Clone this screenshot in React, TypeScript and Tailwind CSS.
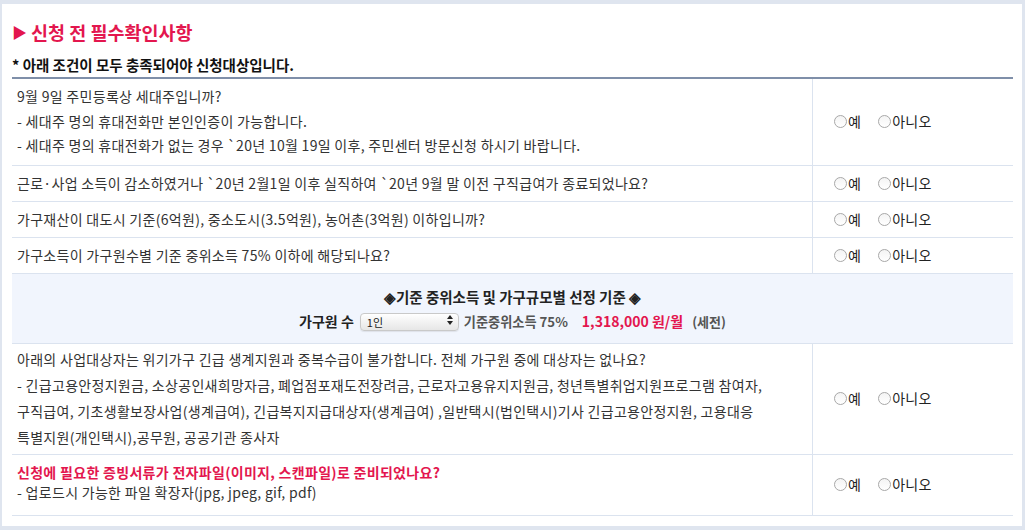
import React from 'react';

const questions = [
  {
    lines: [
      '9월 9일 주민등록상 세대주입니까?',
      '- 세대주 명의 휴대전화만 본인인증이 가능합니다.',
      '- 세대주 명의 휴대전화가 없는 경우 `20년 10월 19일 이후, 주민센터 방문신청 하시기 바랍니다.',
    ],
    pad: 'pt-[5px] pb-[7px] leading-[24.5px]',
  },
  {
    lines: ['근로·사업 소득이 감소하였거나 `20년 2월1일 이후 실직하여 `20년 9월 말 이전 구직급여가 종료되었나요?'],
    pad: 'py-[6px] leading-[23px]',
  },
  {
    lines: ['가구재산이 대도시 기준(6억원), 중소도시(3.5억원), 농어촌(3억원) 이하입니까?'],
    pad: 'py-[6px] leading-[23px]',
  },
  {
    lines: ['가구소득이 가구원수별 기준 중위소득 75% 이하에 해당되나요?'],
    pad: 'py-[6px] leading-[23px]',
  },
];

const Radio: React.FC<{ label: string }> = ({ label }) => (
  <label className="flex items-center gap-px text-[14px] text-[#222]">
    <span className="h-[13px] w-[13px] rounded-full border border-[#a8a8a8] bg-gradient-to-b from-[#f4f4f4] to-white" />
    <span>{label}</span>
  </label>
);

const Answer: React.FC = () => (
  <div className="flex items-center gap-[17px] border-l border-[#dbe3ef] pl-[21px]">
    <Radio label="예" />
    <Radio label="아니오" />
  </div>
);

const App: React.FC = () => {
  return (
    <div className="h-[530px] bg-[#dfe5ef] pb-1 pl-[2px] pr-[3px] pt-1 font-['Noto_Sans_CJK_KR',sans-serif]">
      <div className="h-full bg-white pl-[10px] pr-[9px] pt-[16px]">
        {/* 제목 */}
        <h2 className="flex items-center gap-[4px] text-[18.5px] font-bold leading-6 text-[#e3164e]">
          <span className="text-[15px]">▶</span>
          <span>신청 전 필수확인사항</span>
        </h2>
        <div className="mt-[11px] border-b-2 border-[#7f8fa9] pb-[2px] text-[14.5px] font-bold leading-5 text-[#111]">
          * 아래 조건이 모두 충족되어야 신청대상입니다.
        </div>

        {/* 확인 항목 */}
        <div className="text-[14px] tracking-[0.3px] text-[#333]">
          {questions.map((q, i) => (
            <div key={i} className="grid grid-cols-[800px_1fr] border-b border-[#dbe3ef]">
              <div className={`pl-[5px] ${q.pad}`}>
                {q.lines.map((l) => (
                  <p key={l}>{l}</p>
                ))}
              </div>
              <Answer />
            </div>
          ))}

          {/* 기준 중위소득 */}
          <div className="flex flex-col items-center gap-px border-b border-[#dbe3ef] bg-[#f1f5fd] pb-[9px] pt-[11px] tracking-normal">
            <p className="text-[14.5px] font-bold leading-6 text-[#222]">◈기준 중위소득 및 가구규모별 선정 기준 ◈</p>
            <div className="flex h-6 items-center">
              <span className="mr-[6px] text-[14px] font-bold text-[#222]">가구원 수</span>
              <div className="relative mr-[5px]">
                <select className="h-[18px] w-[99px] appearance-none rounded-[4px] border border-[#c9c9c9] bg-gradient-to-b from-white to-[#e6e6e6] pl-[6px] text-[11px] leading-4 text-[#222] shadow-[0_1px_1px_rgba(0,0,0,0.08)] outline-none">
                  <option>1인</option>
                  <option>2인</option>
                  <option>3인</option>
                  <option>4인</option>
                </select>
                <svg className="pointer-events-none absolute right-[6px] top-[4px]" width="6" height="10" viewBox="0 0 6 10">
                  <path d="M3 0L6 4H0z" fill="#222" />
                  <path d="M3 10L0 6H6z" fill="#222" />
                </svg>
              </div>
              <span className="mr-[14px] text-[13.2px] font-semibold text-[#555]">기준중위소득 75%</span>
              <span className="mr-[9px] text-[14px] font-bold text-[#e3164e]">1,318,000 원/월</span>
              <span className="text-[13px] font-semibold text-[#555]">(세전)</span>
            </div>
          </div>

          {/* 중복수급 */}
          <div className="grid grid-cols-[800px_1fr] border-b border-[#dbe3ef]">
            <div className="whitespace-nowrap pb-[4px] pl-[5px] pt-[2px] leading-[26px]">
              <p>아래의 사업대상자는 위기가구 긴급 생계지원과 중복수급이 불가합니다. 전체 가구원 중에 대상자는 없나요?</p>
              <p>
                - 긴급고용안정지원금, 소상공인새희망자금, 폐업점포재도전장려금, 근로자고용유지지원금, 청년특별취업지원프로그램 참여자,
                <br />
                구직급여, 기초생활보장사업(생계급여), 긴급복지지급대상자(생계급여) ,일반택시(법인택시)기사 긴급고용안정지원, 고용대응
                <br />
                특별지원(개인택시),공무원, 공공기관 종사자
              </p>
            </div>
            <Answer />
          </div>

          {/* 증빙서류 */}
          <div className="grid grid-cols-[800px_1fr] border-b border-[#dbe3ef]">
            <div className="pb-[13px] pl-[5px] pt-[7px] leading-5">
              <p className="font-bold text-[#e3164e]">신청에 필요한 증빙서류가 전자파일(이미지, 스캔파일)로 준비되었나요?</p>
              <p>- 업로드시 가능한 파일 확장자(jpg, jpeg, gif, pdf)</p>
            </div>
            <Answer />
          </div>
        </div>
      </div>
    </div>
  );
};

export default App;
